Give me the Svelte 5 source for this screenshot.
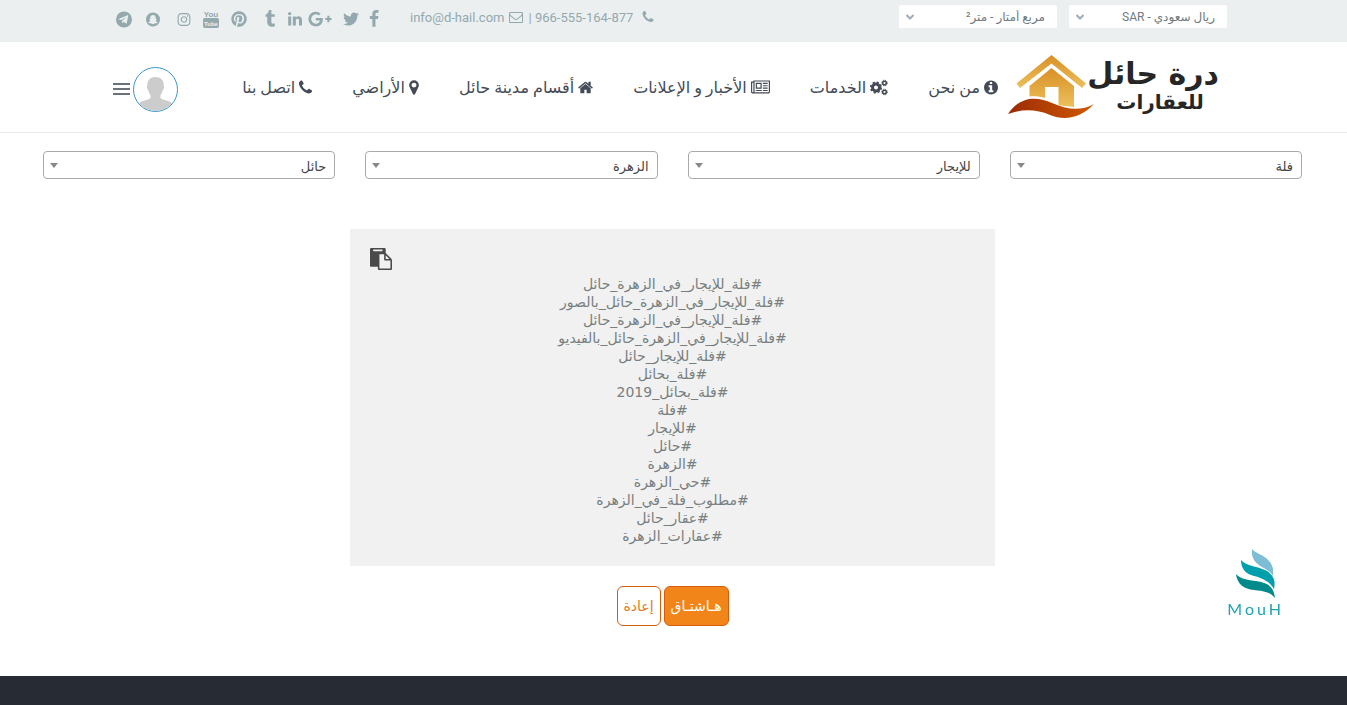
<script lang="ts">
  const social = [
    { name: "Facebook", w: 20, h: 18, box: "0 0 1792 1792", d: "M1343 12v264h-157q-86 0-116 36t-30 108v189h293l-39 296h-254v759h-306v-759h-255v-296h255v-218q0-186 104-288.5t277-102.5q147 0 228 12z" },
    { name: "Twitter", w: 26, h: 18, box: "0 0 1792 1792", d: "M1684 408q-67 98-162 167 1 14 1 42 0 130-38 259.5t-115.5 248.5-184.5 210.5-258 146-323 54.5q-271 0-496-145 35 4 78 4 225 0 401-138-105-2-188-64.5t-114-159.5q33 5 61 5 43 0 85-11-112-23-185.5-111.5t-73.5-205.5v-4q68 38 146 41-66-44-105-115t-39-154q0-88 44-163 121 149 294.5 238.5t371.5 99.5q-8-38-8-74 0-134 94.5-228.5t228.5-94.5q140 0 236 102 109-21 205-78-37 115-142 178 93-10 186-50z" },
    { name: "Google Plus", w: 36, h: 18, box: "-256 0 2304 1792", d: "M1181 913q0 208-87 370.5t-248 254-369 91.5q-149 0-285-58t-234-156-156-234-58-285 58-285 156-234 234-156 285-58q286 0 491 192l-199 191q-117-113-292-113-123 0-227.5 62t-165.5 168.5-61 232.5 61 232.5 165.5 168.5 227.5 62q83 0 152.5-23t114.5-57.5 78.5-78.5 49-83 21.5-74h-416v-252h692q12 63 12 122zm867-122v210h-209v209h-210v-209h-209v-210h209v-209h210v209h209z" },
    { name: "LinkedIn", w: 14, h: 18, box: "128 0 1536 1792", d: "M477 625v991h-330v-991h330zm21-306q1 73-50.5 122t-135.5 49h-2q-82 0-132-49t-50-122q0-74 51.5-122.5t134.5-48.5 133 48.5 51 122.5zm1166 729v568h-329v-530q0-105-40.5-164.5t-126.5-59.5q-63 0-105.5 34.5t-63.5 85.500q-11 30-11 81v553h-329q2-399 2-647t-1-296l-1-48h329v144h-2q20-32 41-56t56.5-52 87-43.5 114.5-15.5q171 0 275 113.5t104 332.5z" },
    { name: "Tumblr", w: 36, h: 18, box: "0 0 1792 1792", d: "M1328 1329l80 237q-23 35-111 66t-177 32q-104 2-190.5-26t-142.5-74-95-106-55.5-120-16.5-118v-544h-168v-215q72-26 129-69.5t91-90 58-102 34-99 15-88.5q1-5 4.5-8.5t7.5-3.5h244v424h333v252h-334v518q0 30 6.5 56t22.5 52.5 49.5 41.5 81.5 14q78-2 134-29z" },
    { name: "Pinterest", w: 26, h: 18, box: "0 0 1792 1792", d: "M1664 896q0 209-103 385.5t-279.5 279.5-385.5 103q-111 0-218-32 59-93 78-164 9-34 54-211 20 39 73 67.5t114 28.5q121 0 216-68.5t147-188.5 52-270q0-114-59.5-214t-172.5-163-255-63q-105 0-196 29t-154.5 77-109 110.5-67 129.5-21.5 134q0 104 40 183t117 111q30 12 38-20 2-7 8-31t8-30q6-23-11-43-51-61-51-151 0-151 104.5-259.5t273.5-108.5q151 0 235.5 82t84.5 213q0 170-68.5 289t-175.5 119q-61 0-98-43.5t-23-104.5q8-35 26.5-93.5t30-103 11.5-75.5q0-50-27-83t-77-33q-62 0-105 57t-43 142q0 73 25 122l-99 418q-17 70-13 177-206-91-333-281t-127-423q0-209 103-385.5t279.5-279.5 385.5-103 385.5 103 279.5 279.5 103 385.5z" },
    { name: "YouTube", w: 30, h: 18, box: "0 0 16 18", d: "" },
    { name: "Instagram", w: 24, h: 15, box: "0 0 1792 1792", d: "M1152 896q0-106-75-181t-181-75-181 75-75 181 75 181 181 75 181-75 75-181zm138 0q0 164-115 279t-279 115-279-115-115-279 115-279 279-115 279 115 115 279zm108-410q0 38-27 65t-65 27-65-27-27-65 27-65 65-27 65 27 27 65zm-502-220q-7 0-76.5-.5t-105.5 0-96.5 3-103 10-71.5 18.5q-50 20-88 58t-58 88q-11 29-18.5 71.5t-10 103-3 96.5 0 105.5.5 76.5-.5 76.5 0 105.5 3 96.5 10 103 18.5 71.5q20 50 58 88t88 58q29 11 71.5 18.5t103 10 96.5 3 105.5 0 76.5-.5 76.5.5 105.5 0 96.5-3 103-10 71.5-18.5q50-20 88-58t58-88q11-29 18.5-71.5t10-103 3-96.5 0-105.5-.5-76.5.5-76.5 0-105.5-3-96.5-10-103-18.5-71.5q-20-50-58-88t-88-58q-29-11-71.5-18.5t-103-10-96.5-3-105.5 0-76.5.5zm768 630q0 229-5 317-10 208-124 322t-322 124q-88 5-317 5t-317-5q-208-10-322-124t-124-322q-5-88-5-317t5-317q10-208 124-322t322-124q88-5 317-5t317 5q208 10 322 124t124 322q5 88 5 317z" },
    { name: "Snapchat", w: 38, h: 15, box: "0 0 30 30", d: "M15 1a14 14 0 1 0 0 28a14 14 0 1 0 0-28zM15 6c3.500 0 5.500 2.500 5.500 5.500v2.500c1 .5 2 0 2 1s-1.500 1-1.800 1.800c.8 2 2 3 3.800 3.600c-.3 1.400-1.700 1.300-2.700 1.600c-.4 1-1.200.8-2.300.7c-1.500.3-2.500 1.800-4.500 1.800s-3-1.500-4.500-1.800c-1.100.1-1.900.3-2.300-.7c-1-.3-2.400-.2-2.700-1.600c1.800-.6 3-1.600 3.800-3.600c-.3-.8-1.800-.8-1.800-1.800s1-.5 2-1v-2.500c0-3 2-5.500 5.500-5.500z" },
    { name: "Telegram", w: 20, h: 17, box: "0 0 34 34", d: "M17 1a16 16 0 1 0 0 32a16 16 0 1 0 0-32zM25.500 9.500l-3 14.500c-.2 1-.9 1.300-1.700.8l-4.300-3.200-2.200 2.200c-.5.5-1.200.3-1.200-.6l.3-3.800 8.200-7.500-10.300 6.300-4.300-1.400c-1-.3-1-1 .2-1.500l16.800-6.600c.9-.3 1.700.1 1.500.8z" },
  ];

  const phonePath = "M1600 1240q0 27-10 70.5t-21 68.5q-21 50-122 106-94 51-186 51-27 0-53-3.5t-57.500-12.500-47-14.500-55.500-20.500-49-18q-98-35-175-83-127-79-264-216t-216-264q-48-77-83-175-3-9-18-49t-20.500-55.500-14.500-47-12.500-57.500-3.500-53q0-92 51-186 56-101 106-122 25-11 68.500-21t70.500-10q14 0 21 3 18 6 53 76 11 19 30 54t35 63.500 31 53.500q3 4 17.500 25t21.500 35.500 7 28.500q0 20-28.500 50t-62 55-62 53-28.500 46q0 9 5 22.500t8.500 20.500 14 24 11.500 19q76 137 174 235t235 174q2 1 19 11.500t24 14 20.500 8.500 22.500 5q18 0 46-28.500t53-62 55-62 50-28.500q14 0 28.500 7t35.500 21.500 25 17.500q25 15 53.500 31t63.500 35 54 30q70 35 76 53 3 7 3 21z";

  const nav = [
    { label: "من نحن", w: 14, box: "128 0 1536 1792", d: "M1152 1376v-160q0-14-9-23t-23-9h-96v-512q0-14-9-23t-23-9h-320q-14 0-23 9t-9 23v160q0 14 9 23t23 9h96v320h-96q-14 0-23 9t-9 23v160q0 14 9 23t23 9h448q14 0 23-9t9-23zm-128-896v-160q0-14-9-23t-23-9h-192q-14 0-23 9t-9 23v160q0 14 9 23t23 9h192q14 0 23-9t9-23zm640 416q0 209-103 385.5t-279.5 279.5-385.5 103-385.5-103-279.5-279.5-103-385.5 103-385.5 279.5-279.5 385.5-103 385.5 103 279.5 279.5 103 385.5z" },
    { label: "الخدمات", w: 18, box: "0 0 18 17", d: "" },
    { label: "الأخبار و الإعلانات", w: 19, box: "0 0 2048 1792", d: "M1024 512h-384v384h384v-384zm128 640v128h-640v-128h640zm0-768v640h-640v-640h640zm640 768v128h-512v-128h512zm0-256v128h-512v-128h512zm0-256v128h-512v-128h512zm0-256v128h-512v-128h512zm-1536 960v-960h-128v960q0 26 19 45t45 19 45-19 19-45zm1664 0v-1088h-1536v1088q0 33-11 64h1483q26 0 45-19t19-45zm128-1216v1216q0 80-56 136t-136 56h-1664q-80 0-136-56t-56-136v-1088h256v-128h1792z" },
    { label: "أقسام مدينة حائل", w: 15, box: "64 0 1664 1792", d: "M1472 992v480q0 26-19 45t-45 19h-384v-384h-256v384h-384q-26 0-45-19t-19-45v-480q0-1 .5-3t.5-3l575-474 575 474q1 2 1 6zm223-69l-62 74q-8 9-21 11h-3q-13 0-21-7l-692-577-692 577q-12 8-24 7-13-2-21-11l-62-74q-8-10-7-23.5t11-21.5l719-599q32-26 76-26t76 26l244 204v-195q0-14 9-23t23-9h192q14 0 23 9t9 23v408l219 182q10 8 11 21.5t-7 23.5z" },
    { label: "الأراضي", w: 10, box: "384 0 1024 1792", d: "M1152 640q0-106-75-181t-181-75-181 75-75 181 75 181 181 75 181-75 75-181zm256 0q0 109-33 179l-364 774q-16 33-47.5 52t-67.5 19-67.5-19-46.5-52l-365-774q-33-70-33-179 0-212 150-362t362-150 362 150 150 362z" },
    { label: "اتصل بنا", w: 13, box: "192 0 1408 1792", d: phonePath },
  ];

  const filters = [
    { id: "type", label: "نوع العقار", value: "فلة" },
    { id: "offer", label: "نوع العرض", value: "للإيجار" },
    { id: "district", label: "الحي", value: "الزهرة" },
    { id: "city", label: "المدينة", value: "حائل" },
  ];

  const hashtags = [
    "#فلة_للإيجار_في_الزهرة_حائل",
    "#فلة_للإيجار_في_الزهرة_حائل_بالصور",
    "#فلة_للإيجار_في_الزهرة_حائل",
    "#فلة_للإيجار_في_الزهرة_حائل_بالفيديو",
    "#فلة_للإيجار_حائل",
    "#فلة_بحائل",
    "#فلة_بحائل_2019",
    "#فلة",
    "#للإيجار",
    "#حائل",
    "#الزهرة",
    "#حي_الزهرة",
    "#مطلوب_فلة_في_الزهرة",
    "#عقار_حائل",
    "#عقارات_الزهرة",
  ];

  function copyTags() {
    navigator.clipboard?.writeText(hashtags.join("\n"));
  }
</script>

<div class="page" dir="rtl">
  <div class="topbar">
    <div class="units">
      <div class="unit">
        <select aria-label="العملة"><option>ريال سعودي - SAR</option></select>
        <svg viewBox="0 0 8 6" aria-hidden="true"><path d="M0.500 1l3.500 3.500 3.500-3.500" /></svg>
      </div>
      <div class="unit">
        <select aria-label="وحدة المساحة"><option>مربع أمتار - متر²</option></select>
        <svg viewBox="0 0 8 6" aria-hidden="true"><path d="M0.500 1l3.500 3.500 3.500-3.500" /></svg>
      </div>
    </div>
    <div class="contact">
      <svg class="call" viewBox="0 0 1792 1792" aria-hidden="true"><path d={phonePath} /></svg>
      <span><a href="tel:966555164877" dir="ltr">966-555-164-877</a> |</span>
      <svg viewBox="0 0 1792 1792" aria-hidden="true"><path d="M1664 1504v-768q-32 36-69 66-268 206-426 338-51 43-83 67t-86.5 48.5-102.5 24.5h-2q-48 0-102.5-24.5t-86.5-48.5-83-67q-158-132-426-338-37-30-69-66v768q0 13 9.5 22.5t22.5 9.5h1472q13 0 22.5-9.5t9.5-22.5zm0-1051v-24.5l-.5-13-3-12.5-5.5-9-9-7.5-14-2.5h-1472q-13 0-22.5 9.5t-9.5 22.5q0 168 147 284 193 152 401 317 6 5 35 29.5t46 37.5 44.5 31.5 50.5 27.5 43 9h2q20 0 43-9t50.5-27.5 44.5-31.5 46-37.5 35-29.5q208-165 401-317 54-43 100.5-115.5t46.5-131.5zm128-37v1088q0 66-47 113t-113 47h-1472q-66 0-113-47t-47-113v-1088q0-66 47-113t113-47h1472q66 0 113 47t47 113z" /></svg>
      <a href="mailto:info@d-hail.com" dir="ltr">info@d-hail.com</a>
    </div>
    <div class="social">
      {#each social as s}
        <a href="#{s.name}" aria-label={s.name}>
          <svg width={s.w} height={s.h} viewBox={s.box} aria-hidden="true">
            {#if s.name === "YouTube"}
              <text class="yt" x="8" y="7" text-anchor="middle" direction="ltr">You</text>
              <rect x="0" y="8" width="16" height="10" rx="2" />
              <text class="yt tube" x="8" y="16" text-anchor="middle" direction="ltr">Tube</text>
            {:else}
              <path fill-rule="evenodd" d={s.d} />
            {/if}
          </svg>
        </a>
      {/each}
    </div>
  </div>

  <header>
    <a class="logo" href="#home" aria-label="درة حائل للعقارات">
      <svg width="210" height="66" viewBox="0 0 210 66">
        <defs>
          <linearGradient id="gold" x1="0" y1="0" x2="0" y2="1">
            <stop offset="0" stop-color="#d98f25" />
            <stop offset="1" stop-color="#ecc05c" />
          </linearGradient>
          <linearGradient id="rust" x1="0" y1="0" x2="1" y2="0">
            <stop offset="0" stop-color="#9c2b04" />
            <stop offset="1" stop-color="#d05a00" />
          </linearGradient>
        </defs>
        <path fill="url(#gold)" d="M43.500 1L78 29.500L74 34L43.500 9.500L12 34L8.500 29.500z" />
        <path fill="url(#gold)" d="M43.500 14L66 32v21c-5-.5-10-1-15.500-2V33H37v11c-5-1.500-10-2-15.500-1.500V32z" />
        <path fill="url(#rust)" d="M0 60C12 42 29 42 44 49C58 55 72 58 86 50C73 64 57 67 42 61C28 55 14 55 0 60z" />
        <text class="brand" x="145" y="30" text-anchor="middle">درة حائل</text>
        <text class="tagline" x="152" y="55" text-anchor="middle">للعقارات</text>
      </svg>
    </a>
    <nav>
      {#each nav as item}
        <a href="#{item.label}">
          <svg width={item.w} height="17" viewBox={item.box} aria-hidden="true">
            {#if item.d}
              <path d={item.d} />
            {:else}
              <g fill="none" stroke="currentColor">
                <circle cx="6" cy="8.500" r="3.500" stroke-width="3" />
                <circle cx="6" cy="8.500" r="5.200" stroke-width="1.700" stroke-dasharray="2.200 1.884" />
                <circle cx="14.500" cy="4" r="1.800" stroke-width="1.500" />
                <circle cx="14.500" cy="4" r="2.800" stroke-width="1" stroke-dasharray="1.200 0.999" />
                <circle cx="14.500" cy="13" r="1.800" stroke-width="1.500" />
                <circle cx="14.500" cy="13" r="2.800" stroke-width="1" stroke-dasharray="1.200 0.999" />
              </g>
            {/if}
          </svg>
          {item.label}
        </a>
      {/each}
    </nav>
    <div class="account">
      <button class="avatar" type="button" aria-label="الحساب">
        <svg viewBox="0 0 43 43" aria-hidden="true">
          <path d="M21.500 9c5 0 8.500 3 8.200 8.500c1 1 .3 3.500-.9 4.500c-.5 2.500-1.500 4-2.300 5.200v3c4 2.500 9.500 2 12.500 6L34 43H9L4 36.200c3-4 8.500-3.500 12.500-6v-3c-.8-1.200-1.800-2.700-2.300-5.200c-1.200-1-1.900-3.500-.9-4.500C13 12 16.500 9 21.500 9z" />
        </svg>
      </button>
      <button class="menu" type="button" aria-label="القائمة"><i></i><i></i><i></i></button>
    </div>
  </header>

  <main>
    <form class="filters">
      {#each filters as f}
        <div class="filter">
          <select id={f.id} aria-label={f.label}><option>{f.value}</option></select>
        </div>
      {/each}
    </form>

    <section class="tags">
      <button class="copy" type="button" aria-label="نسخ" onclick={copyTags}>
        <svg width="22" height="22" viewBox="0 0 1792 1792" aria-hidden="true"><path d="M768 1664h896v-640h-416q-40 0-68-28t-28-68v-416h-384v1152zm256-1440v-64q0-13-9.5-22.5t-22.5-9.5h-704q-13 0-22.5 9.5t-9.5 22.5v64q0 13 9.5 22.5t22.5 9.5h704q13 0 22.5-9.5t9.5-22.5zm256 672h299l-299-299v299zm512 128v672q0 40-28 68t-68 28h-960q-40 0-68-28t-28-68v-160h-544q-40 0-68-28t-28-68v-1344q0-40 28-68t68-28h1088q40 0 68 28t28 68v328q21 13 36 28l408 408q28 28 48 76t20 88z" /></svg>
      </button>
      {#each hashtags as tag}
        <p>{tag}</p>
      {/each}
    </section>

    <div class="actions">
      <button class="btn primary" type="button">هـاشتـاق</button>
      <button class="btn" type="button">إعادة</button>
    </div>
  </main>

  <footer></footer>

  <a class="mouh" href="#mouh" aria-label="MouH">
    <svg width="40" height="50" viewBox="0 0 40 50" aria-hidden="true">
      <path fill="#7dbdd6" d="M16 0C15 9 19 14 26 18C31 21 35 23 37 27C38 19 36 14 30 9C25 5 19 4 16 0z" />
      <path fill="#009fae" d="M5 11C5 20 10 25 18 27C27 29 34 33 38 40C40 31 37 25 29 21C20 17 10 17 5 11z" />
      <path fill="#008a8c" d="M0 25C1 35 8 40 18 41C28 42 34 43 39 49C38 40 34 35 25 33C15 31 5 31 0 25z" />
    </svg>
    <span dir="ltr">MouH</span>
  </a>
</div>

<style>
  :global(body) {
    margin: 0;
    background: #fff;
  }

  .page {
    position: relative;
    min-height: 100vh;
    display: flex;
    flex-direction: column;
    font-family: Roboto, "DejaVu Sans", sans-serif;
    color: #777f80;
  }

  a {
    color: inherit;
    text-decoration: none;
  }

  svg {
    display: block;
    fill: currentColor;
    flex: none;
  }

  select,
  button {
    font-family: inherit;
    margin: 0;
    cursor: pointer;
  }

  select {
    appearance: none;
    width: 100%;
    border: 0;
    background: transparent;
  }

  .topbar {
    display: flex;
    align-items: flex-start;
    box-sizing: border-box;
    height: 42px;
    padding: 5px 120px 0 114px;
    background: #ebeff0;
    color: #93a9ae;
  }

  .units {
    display: flex;
    gap: 12px;
  }

  .unit {
    position: relative;
    width: 158px;
    background: #fff;
    border-radius: 2px;
  }

  .unit select {
    display: block;
    height: 23px;
    padding: 0 12px 0 24px;
    font-size: 12px;
    color: #6f7a7d;
  }

  .unit svg {
    position: absolute;
    left: 7px;
    top: 9px;
    width: 8px;
    height: 6px;
    fill: none;
    stroke: #a3adb5;
    stroke-width: 2;
  }

  .contact {
    display: flex;
    align-items: center;
    gap: 5px;
    height: 24px;
    margin-right: auto;
    font-size: 13px;
  }

  .contact svg {
    width: 14px;
    height: 14px;
  }

  .contact .call {
    margin-left: 3px;
  }

  .social {
    display: flex;
    align-items: center;
    height: 28px;
    margin-right: 26px;
  }

  .yt {
    font: bold 8px "Liberation Sans", sans-serif;
  }

  .tube {
    font-size: 6px;
    fill: #ebeff0;
  }

  header {
    display: flex;
    align-items: center;
    height: 90px;
    padding: 0 129px 0 113px;
    border-bottom: 1px solid #ebebeb;
  }

  .brand,
  .tagline {
    font-family: "DejaVu Sans", sans-serif;
    font-weight: bold;
    font-size: 30px;
    fill: #262626;
  }

  .tagline {
    font-size: 20px;
  }

  nav {
    display: flex;
    gap: 40px;
    margin-right: 10px;
  }

  nav a {
    display: flex;
    align-items: center;
    gap: 4px;
    font-size: 16px;
    white-space: nowrap;
    color: #444b57;
  }

  .account {
    display: flex;
    align-items: center;
    gap: 3px;
    margin-top: 4px;
    margin-right: auto;
  }

  .avatar {
    width: 45px;
    height: 45px;
    padding: 0;
    overflow: hidden;
    border: 1px solid #3a97c9;
    border-radius: 50%;
    background: #fff;
    color: #ccc;
  }

  .menu {
    display: flex;
    flex-direction: column;
    gap: 3px;
    padding: 0;
    border: 0;
    background: none;
  }

  .menu i {
    width: 17px;
    height: 2px;
    background: #6b7278;
  }

  main {
    padding: 18px 45px 50px 43px;
  }

  .filters {
    display: grid;
    grid-template-columns: repeat(4, 1fr);
    gap: 30px;
  }

  .filter {
    position: relative;
  }

  .filter::after {
    content: "";
    position: absolute;
    left: 7px;
    top: 12px;
    border: 4px solid transparent;
    border-top: 5px solid #888;
    border-bottom: 0;
  }

  .filter select {
    display: block;
    height: 28px;
    padding: 2px 8px 0 20px;
    border: 1px solid #aaa;
    border-radius: 4px;
    font-size: 13px;
    color: #444;
  }

  .tags {
    display: flex;
    flex-direction: column;
    box-sizing: border-box;
    width: 51.2%;
    margin: 50px auto 20px;
    padding: 19px 20px 21px;
    background: #f1f1f1;
    text-align: center;
    font-family: "DejaVu Sans", sans-serif;
    font-size: 14px;
    line-height: 18px;
  }

  .tags p {
    margin: 0;
  }

  .copy {
    align-self: flex-end;
    padding: 0 0 5px;
    border: 0;
    background: none;
    color: #4a4a4a;
  }

  .actions {
    display: flex;
    justify-content: center;
    gap: 3px;
  }

  .btn {
    height: 40px;
    padding: 0 6px;
    border: 1px solid #d35d0d;
    border-radius: 6px;
    background: #fff;
    font-size: 14px;
    color: #e07b20;
  }

  .btn.primary {
    background: #f28519;
    color: #fff;
  }

  footer {
    flex: 1;
    min-height: 29px;
    background: #272b33;
  }

  .mouh {
    position: fixed;
    right: 63px;
    bottom: 86px;
    display: flex;
    flex-direction: column;
    align-items: center;
    color: #1fa3ae;
  }

  .mouh span {
    font-family: Lato, sans-serif;
    font-size: 16px;
    line-height: 20px;
    letter-spacing: 3px;
  }
</style>
